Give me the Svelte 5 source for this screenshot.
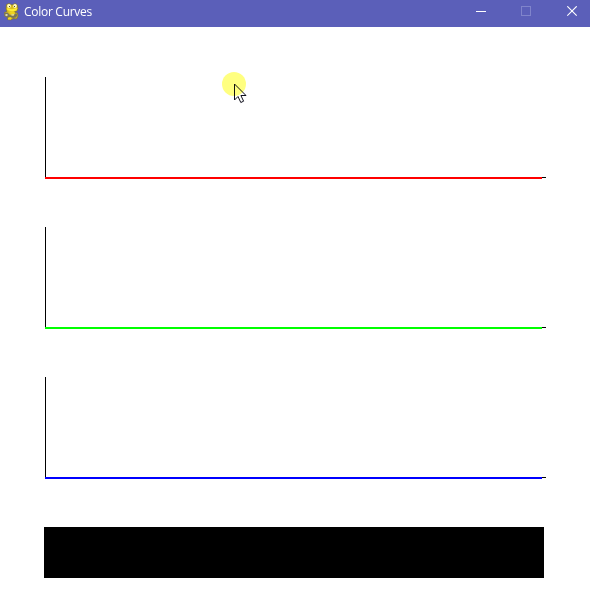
<script>
  const channels = [
    { name: 'red', color: '#ff0000' },
    { name: 'green', color: '#00ff00' },
    { name: 'blue', color: '#0000ff' }
  ];
</script>

<div class="window">
  <header class="titlebar">
    <svg class="logo" width="16" height="18" viewBox="0 0 16 18" aria-hidden="true">
      <path d="M2.5 1.5L5 .6 8 2 11 .6 13.3 2 14 5.5 13 8 10.5 9 13.5 10 14 13 12.5 16 9 15.5 7 17 3.5 16.5 4 14.5 .7 13 .5 9.5 3 8.5 2 6Z" fill="#d9bd20" stroke="#7d7135" stroke-width=".7" />
      <path d="M3 5L8 6.2 13.2 5 12.4 7.5 8 8.4 3.3 7Z" fill="#ffed32" />
      <ellipse cx="5" cy="3" rx="1.9" ry="1.9" fill="#fffbc0" />
      <ellipse cx="11" cy="3" rx="1.8" ry="1.9" fill="#fffbc0" />
      <path d="M5 3h1v1H5zM10 3h1v1h-1z" fill="#555035" />
      <path d="M1 10L3.5 9.5 6 12 9 13 12 10 13.5 12 12 14.5 9 15 6 14 4 14.5 1 12.5Z" fill="#77745c" />
      <path d="M1.5 11h2v2h-2zM7.5 10.5h2.5v2H7.5z" fill="#d9d6b5" />
      <path d="M5 8.5h5l1 1.5-2 1.5-3-1zM4 15l3-.8V16.5H4z" fill="#f0d51e" />
    </svg>
    <h1>Color Curves</h1>
    <div class="controls">
      <svg width="11" height="11" viewBox="0 0 11 11" shape-rendering="crispEdges"><path d="M0 5.5H10" stroke="#fff" /></svg>
      <svg width="11" height="11" viewBox="0 0 11 11" shape-rendering="crispEdges"><path d="M.5.5h9v9h-9z" fill="none" stroke="#8084cb" /></svg>
      <svg width="11" height="11" viewBox="0 0 11 11"><path d="M.3.3L9.7 9.7M9.7.3L.3 9.7" stroke="#fff" stroke-width="1.15" /></svg>
    </div>
  </header>

  <main>
    {#each channels as channel (channel.name)}
      <svg class="plot" width="501" height="102" viewBox="0 0 501 102" shape-rendering="crispEdges" role="img" aria-label={channel.name}>
        <path d="M0 0h1v100h500v1H0z" fill="#000" />
        <rect y="100" width="497" height="2" fill={channel.color} />
      </svg>
    {/each}
    <div class="preview"></div>
  </main>

  <div class="pointer">
    <svg width="26" height="34" viewBox="0 0 26 34">
      <path d="M13.5 13v16l3.5-3.5 2.8 6 2.8-1.3-2.7-5.7H25z" fill="#fff" stroke="#10101c" stroke-width="1" />
    </svg>
    <div class="halo"></div>
  </div>
</div>

<style>
  :global(body) {
    margin: 0;
    background: #fff;
  }
  .window {
    position: relative;
    width: 590px;
    height: 616px;
    overflow: hidden;
    background: #fff;
  }
  .titlebar {
    display: flex;
    box-sizing: border-box;
    height: 27px;
    padding: 3px 12px 0 4px;
    background: #5b5fb9;
  }
  .logo {
    flex: none;
  }
  h1 {
    margin: 0 0 0 4px;
    font: 400 12px/18px "Open Sans", "Noto Sans", sans-serif;
    letter-spacing: -0.28px;
    color: #fff;
    white-space: nowrap;
  }
  .controls {
    display: flex;
    gap: 34px;
    margin-left: auto;
    padding-top: 3px;
  }
  .controls svg {
    display: block;
  }
  .controls svg:last-child {
    margin-left: 1px;
  }
  main {
    display: flex;
    flex-direction: column;
    gap: 48px;
    padding: 50px 44px 0 44px;
  }
  .plot {
    display: block;
    flex: none;
    margin-left: 1px;
  }
  .preview {
    width: 500px;
    height: 51px;
    background: #000;
  }
  .pointer {
    position: absolute;
    left: 221px;
    top: 71px;
    width: 26px;
    height: 34px;
  }
  .pointer svg {
    display: block;
  }
  .halo {
    position: absolute;
    left: 1px;
    top: 1px;
    width: 24px;
    height: 24px;
    border-radius: 50%;
    background: #ffff80;
    mix-blend-mode: multiply;
  }
</style>
